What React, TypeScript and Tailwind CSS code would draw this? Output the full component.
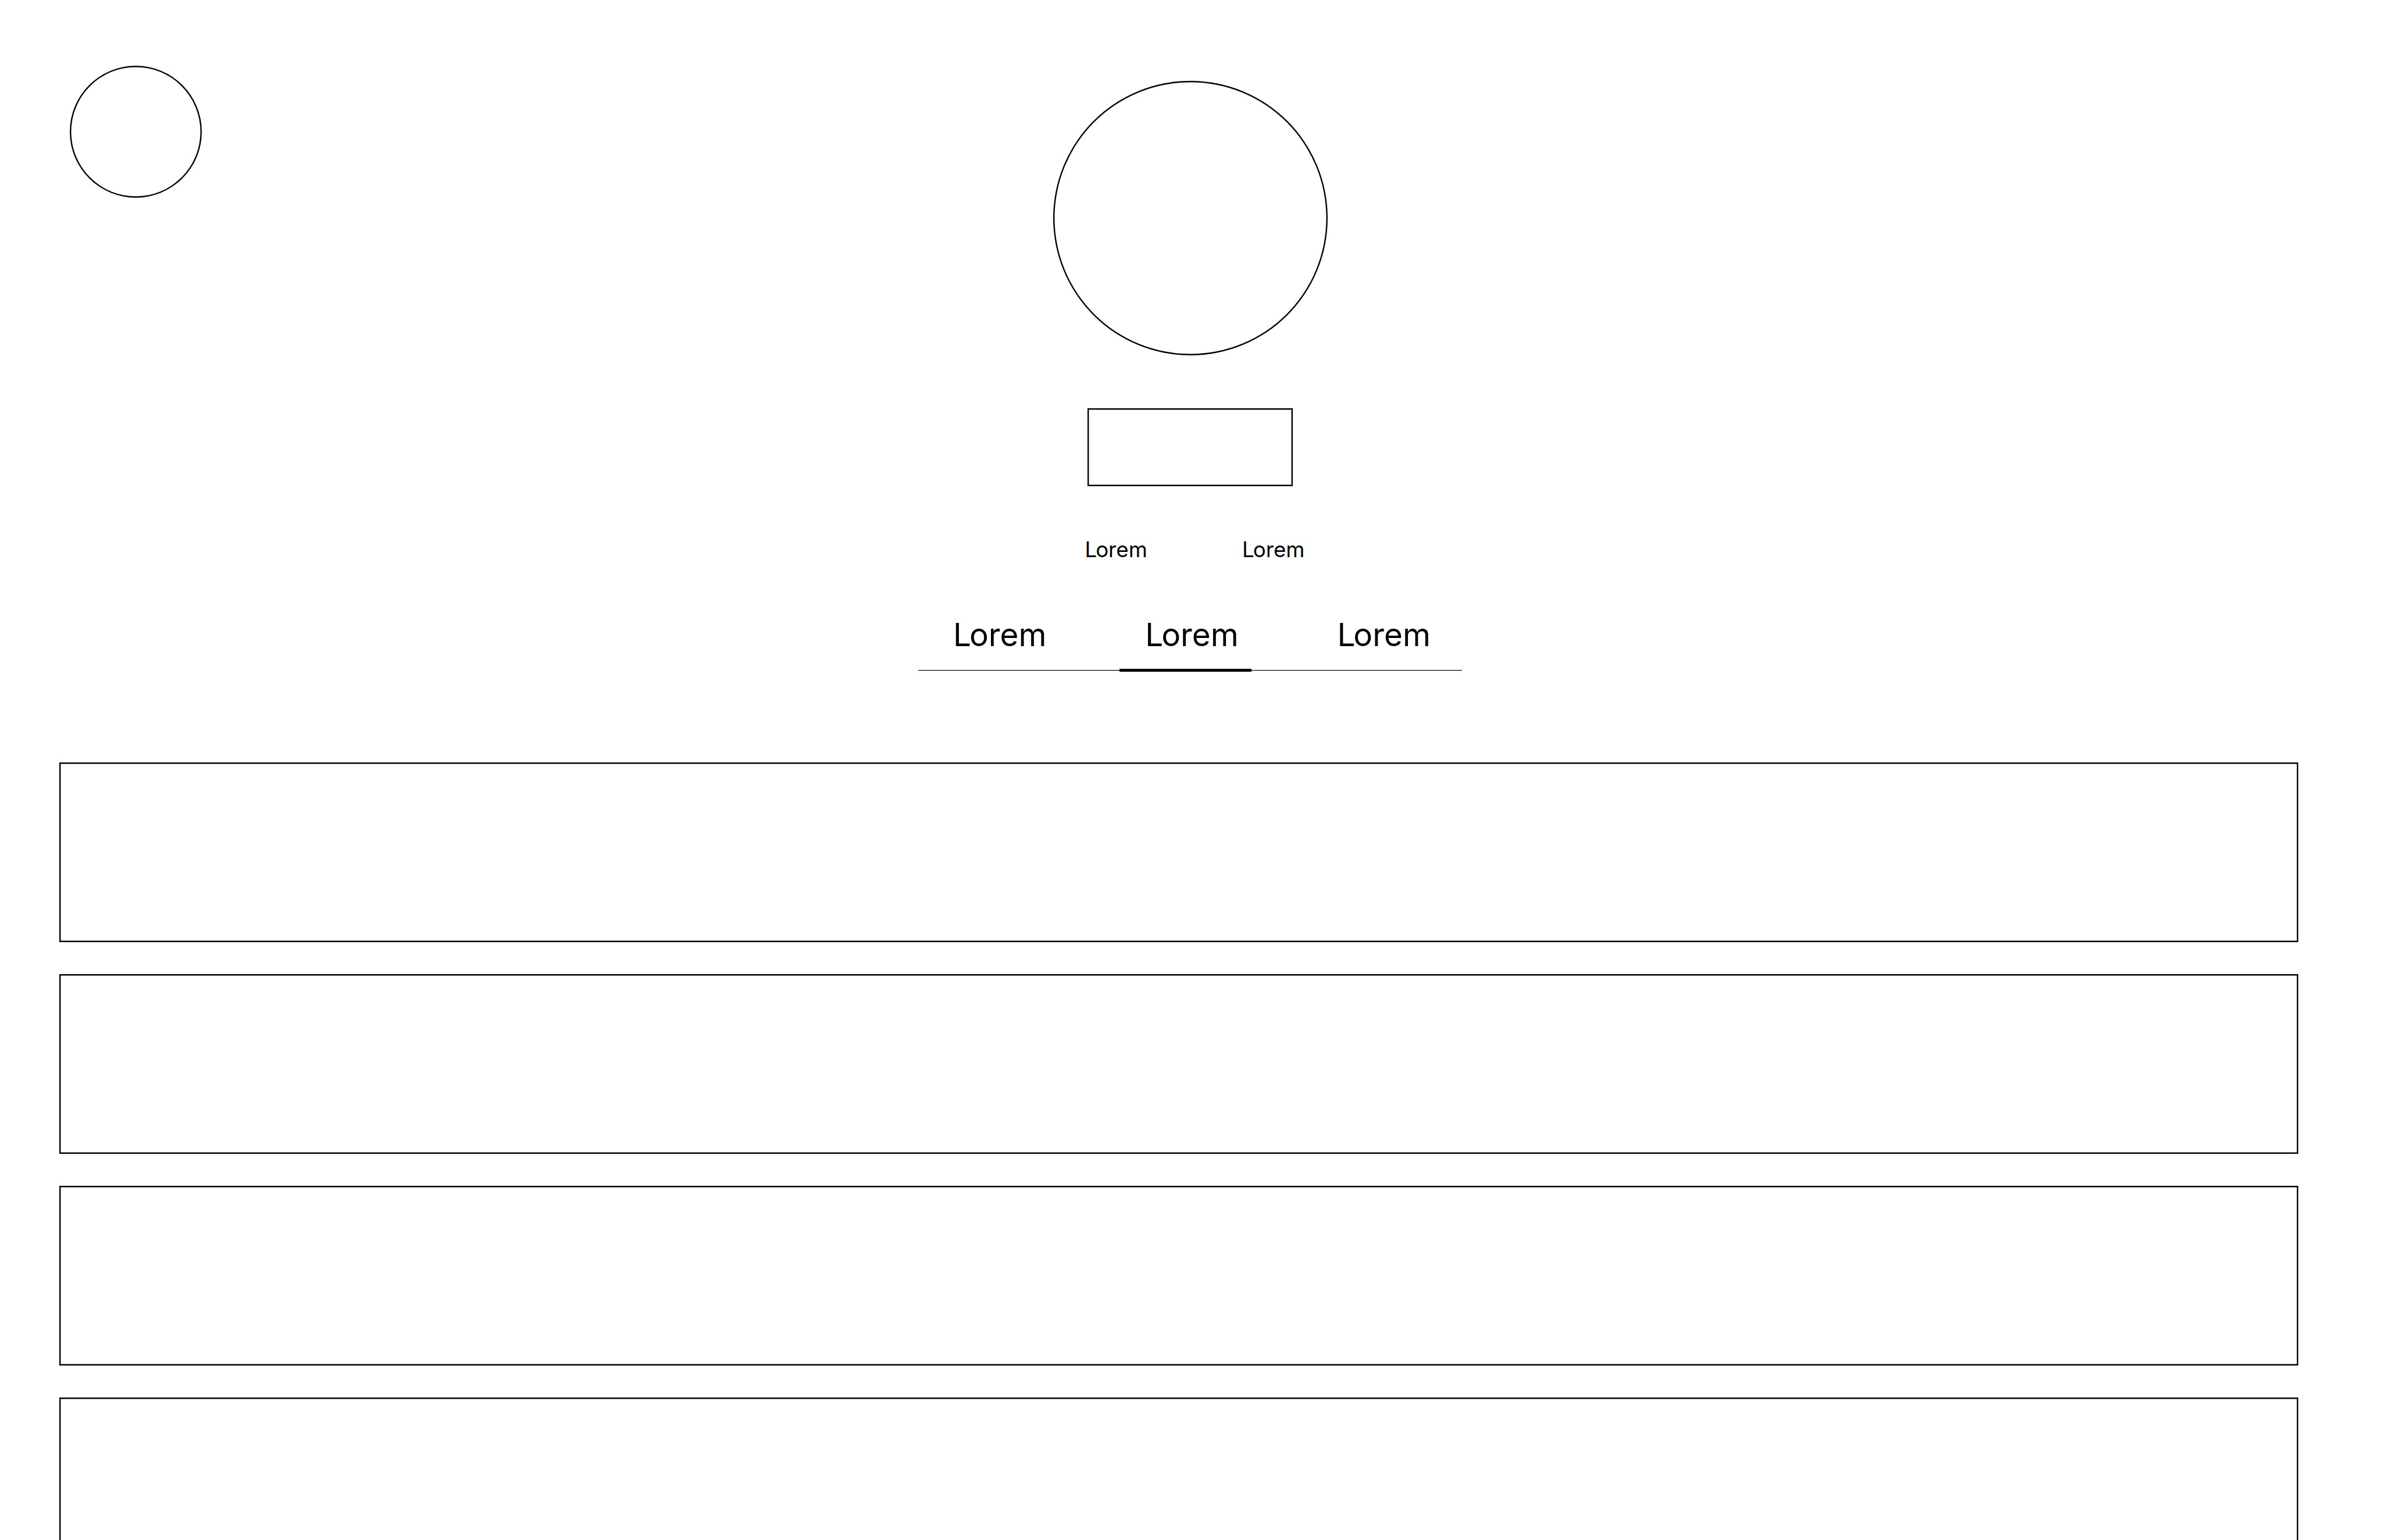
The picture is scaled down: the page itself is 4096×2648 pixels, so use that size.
const outline = "shadow-[inset_0_0_0_2.4px_#000]";
const hairline = "h-px bg-black shadow-[0_1px_0_rgba(0,0,0,0.2)]";

function Label() {
  return (
    <>
      <span className="tracking-[-0.055em]">L</span>orem
    </>
  );
}

export default function App() {
  return (
    <div className="flex h-[2648px] w-[4096px] flex-col overflow-hidden bg-white font-['Inter',sans-serif] font-normal text-black">
      <header className="flex shrink-0 items-start">
        <div className={`mt-[113px] ml-[120px] size-[227px] shrink-0 rounded-full ${outline}`} />

        <div className="ml-[1232px] flex w-[935px] shrink-0 flex-col items-center pt-[139px]">
          <div className={`size-[472px] rounded-full ${outline}`} />
          <div className={`mt-[91px] h-[134px] w-[353px] ${outline}`} />

          <div className="mt-[86px] flex w-full pl-[286.4px] text-[36.7px] leading-[45px]">
            <span className="w-[270.6px]">
              <Label />
            </span>
            <span>
              <Label />
            </span>
          </div>

          <nav className="mt-[91px] w-full">
            <div className="flex pl-[60px] text-[54.8px] leading-[66px]">
              <span className="w-[330.2px]">
                <Label />
              </span>
              <span className="w-[330.2px]">
                <Label />
              </span>
              <span>
                <Label />
              </span>
            </div>
            <div className="mt-[26px] flex h-[5px] items-center">
              <div className={`w-[346px] ${hairline}`} />
              <div className="h-[5px] w-[227px] bg-black" />
              <div className={`flex-1 ${hairline}`} />
            </div>
          </nav>
        </div>
      </header>

      <main className="mt-[156px] ml-[102px] flex w-[3850px] flex-col gap-[55px]">
        {[0, 1, 2, 3].map((i) => (
          <div key={i} className={`h-[309px] shrink-0 ${outline}`} />
        ))}
      </main>
    </div>
  );
}
